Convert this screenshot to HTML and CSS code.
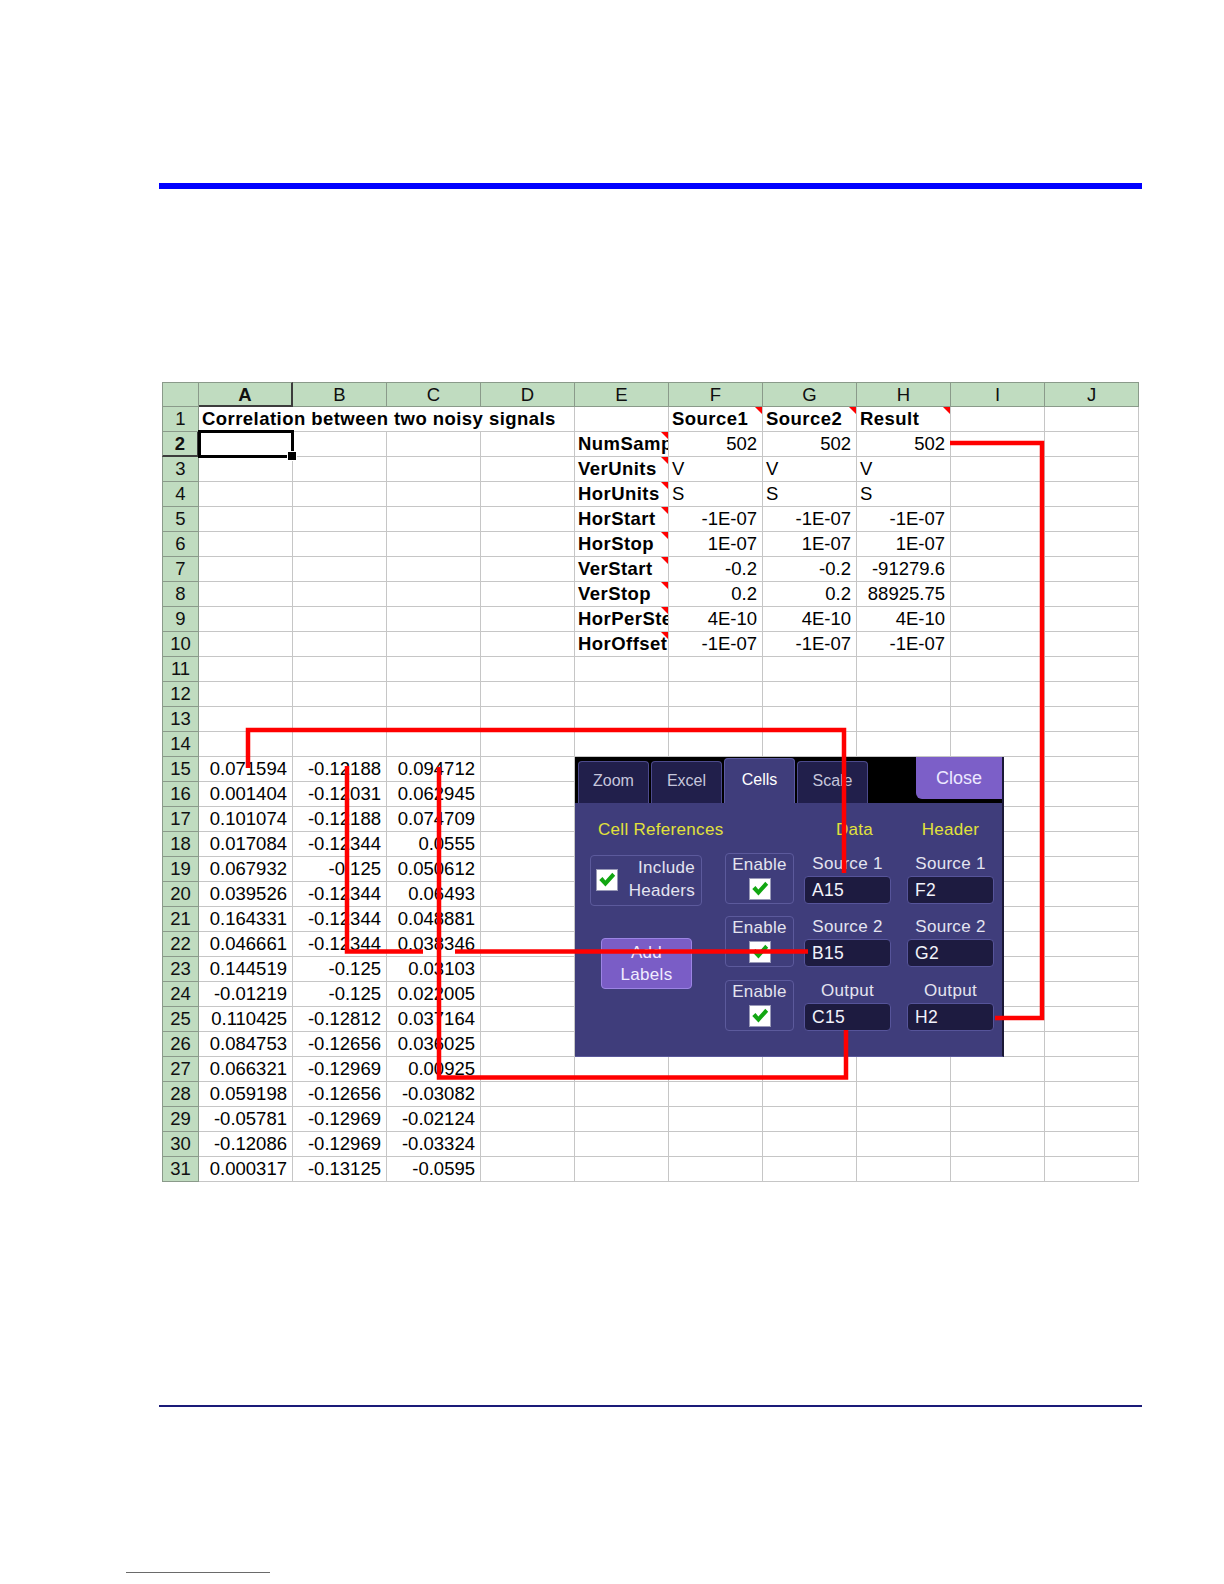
FILE: index.html
```html
<!DOCTYPE html>
<html>
<head>
<meta charset="utf-8">
<title>Correlation between two noisy signals</title>
<link rel="stylesheet" href="styles.css">
</head>
<body>
<div class="page">
  <div class="topbar"></div>

  <div class="sheet">
    <div class="row hdr"><div></div><div class="hsel">A</div><div>B</div><div>C</div><div>D</div><div>E</div><div>F</div><div>G</div><div>H</div><div>I</div><div>J</div></div>
    <div class="row"><div class="rh">1</div><div class="span4 t b">Correlation between two noisy signals</div><div></div><div class="t b note">Source1</div><div class="t b note">Source2</div><div class="t b note">Result</div><div></div><div></div></div>
    <div class="row"><div class="rh hsel">2</div><div class="sel"></div><div></div><div></div><div></div><div class="t b note">NumSamp</div><div class="n">502</div><div class="n">502</div><div class="n">502</div><div></div><div></div></div>
    <div class="row"><div class="rh">3</div><div></div><div></div><div></div><div></div><div class="t b note">VerUnits</div><div class="t">V</div><div class="t">V</div><div class="t">V</div><div></div><div></div></div>
    <div class="row"><div class="rh">4</div><div></div><div></div><div></div><div></div><div class="t b note">HorUnits</div><div class="t">S</div><div class="t">S</div><div class="t">S</div><div></div><div></div></div>
    <div class="row"><div class="rh">5</div><div></div><div></div><div></div><div></div><div class="t b note">HorStart</div><div class="n">-1E-07</div><div class="n">-1E-07</div><div class="n">-1E-07</div><div></div><div></div></div>
    <div class="row"><div class="rh">6</div><div></div><div></div><div></div><div></div><div class="t b note">HorStop</div><div class="n">1E-07</div><div class="n">1E-07</div><div class="n">1E-07</div><div></div><div></div></div>
    <div class="row"><div class="rh">7</div><div></div><div></div><div></div><div></div><div class="t b note">VerStart</div><div class="n">-0.2</div><div class="n">-0.2</div><div class="n">-91279.6</div><div></div><div></div></div>
    <div class="row"><div class="rh">8</div><div></div><div></div><div></div><div></div><div class="t b note">VerStop</div><div class="n">0.2</div><div class="n">0.2</div><div class="n">88925.75</div><div></div><div></div></div>
    <div class="row"><div class="rh">9</div><div></div><div></div><div></div><div></div><div class="t b note">HorPerStep</div><div class="n">4E-10</div><div class="n">4E-10</div><div class="n">4E-10</div><div></div><div></div></div>
    <div class="row"><div class="rh">10</div><div></div><div></div><div></div><div></div><div class="t b note">HorOffset</div><div class="n">-1E-07</div><div class="n">-1E-07</div><div class="n">-1E-07</div><div></div><div></div></div>
    <div class="row"><div class="rh">11</div><div></div><div></div><div></div><div></div><div></div><div></div><div></div><div></div><div></div><div></div></div>
    <div class="row"><div class="rh">12</div><div></div><div></div><div></div><div></div><div></div><div></div><div></div><div></div><div></div><div></div></div>
    <div class="row"><div class="rh">13</div><div></div><div></div><div></div><div></div><div></div><div></div><div></div><div></div><div></div><div></div></div>
    <div class="row"><div class="rh">14</div><div></div><div></div><div></div><div></div><div></div><div></div><div></div><div></div><div></div><div></div></div>
    <div class="row"><div class="rh">15</div><div class="n">0.071594</div><div class="n">-0.12188</div><div class="n">0.094712</div><div></div><div></div><div></div><div></div><div></div><div></div><div></div></div>
    <div class="row"><div class="rh">16</div><div class="n">0.001404</div><div class="n">-0.12031</div><div class="n">0.062945</div><div></div><div></div><div></div><div></div><div></div><div></div><div></div></div>
    <div class="row"><div class="rh">17</div><div class="n">0.101074</div><div class="n">-0.12188</div><div class="n">0.074709</div><div></div><div></div><div></div><div></div><div></div><div></div><div></div></div>
    <div class="row"><div class="rh">18</div><div class="n">0.017084</div><div class="n">-0.12344</div><div class="n">0.0555</div><div></div><div></div><div></div><div></div><div></div><div></div><div></div></div>
    <div class="row"><div class="rh">19</div><div class="n">0.067932</div><div class="n">-0.125</div><div class="n">0.050612</div><div></div><div></div><div></div><div></div><div></div><div></div><div></div></div>
    <div class="row"><div class="rh">20</div><div class="n">0.039526</div><div class="n">-0.12344</div><div class="n">0.06493</div><div></div><div></div><div></div><div></div><div></div><div></div><div></div></div>
    <div class="row"><div class="rh">21</div><div class="n">0.164331</div><div class="n">-0.12344</div><div class="n">0.048881</div><div></div><div></div><div></div><div></div><div></div><div></div><div></div></div>
    <div class="row"><div class="rh">22</div><div class="n">0.046661</div><div class="n">-0.12344</div><div class="n">0.038346</div><div></div><div></div><div></div><div></div><div></div><div></div><div></div></div>
    <div class="row"><div class="rh">23</div><div class="n">0.144519</div><div class="n">-0.125</div><div class="n">0.03103</div><div></div><div></div><div></div><div></div><div></div><div></div><div></div></div>
    <div class="row"><div class="rh">24</div><div class="n">-0.01219</div><div class="n">-0.125</div><div class="n">0.022005</div><div></div><div></div><div></div><div></div><div></div><div></div><div></div></div>
    <div class="row"><div class="rh">25</div><div class="n">0.110425</div><div class="n">-0.12812</div><div class="n">0.037164</div><div></div><div></div><div></div><div></div><div></div><div></div><div></div></div>
    <div class="row"><div class="rh">26</div><div class="n">0.084753</div><div class="n">-0.12656</div><div class="n">0.036025</div><div></div><div></div><div></div><div></div><div></div><div></div><div></div></div>
    <div class="row"><div class="rh">27</div><div class="n">0.066321</div><div class="n">-0.12969</div><div class="n">0.00925</div><div></div><div></div><div></div><div></div><div></div><div></div><div></div></div>
    <div class="row"><div class="rh">28</div><div class="n">0.059198</div><div class="n">-0.12656</div><div class="n">-0.03082</div><div></div><div></div><div></div><div></div><div></div><div></div><div></div></div>
    <div class="row"><div class="rh">29</div><div class="n">-0.05781</div><div class="n">-0.12969</div><div class="n">-0.02124</div><div></div><div></div><div></div><div></div><div></div><div></div><div></div></div>
    <div class="row"><div class="rh">30</div><div class="n">-0.12086</div><div class="n">-0.12969</div><div class="n">-0.03324</div><div></div><div></div><div></div><div></div><div></div><div></div><div></div></div>
    <div class="row"><div class="rh">31</div><div class="n">0.000317</div><div class="n">-0.13125</div><div class="n">-0.0595</div><div></div><div></div><div></div><div></div><div></div><div></div><div></div></div>

    <div class="dlg">
      <div class="tabbar">
        <div class="tab">Zoom</div>
        <div class="tab">Excel</div>
        <div class="tab on">Cells</div>
        <div class="tab">Scale</div>
        <div class="close">Close</div>
      </div>
      <div class="dbody">
        <div class="ttl ttl-cr">Cell References</div>
        <div></div>
        <div class="ttl ttl-data">Data</div>
        <div class="ttl ttl-hdr">Header</div>

        <div class="inc">
          <span class="cb"><svg viewBox="0 0 22 22" width="20" height="20"><path d="M2.5 11 L6 7.8 L9.2 11.6 L16.8 3 L20 6.2 L9.3 18.2 Z" fill="#12a612"/></svg></span>
          <div class="inc-txt">Include<br>Headers</div>
        </div>
        <div class="en"><span>Enable</span><span class="cb"><svg viewBox="0 0 22 22" width="20" height="20"><path d="M2.5 11 L6 7.8 L9.2 11.6 L16.8 3 L20 6.2 L9.3 18.2 Z" fill="#12a612"/></svg></span></div>
        <div class="fld"><div class="lbl">Source 1</div><div class="inp">A15</div></div>
        <div class="fld"><div class="lbl">Source 1</div><div class="inp">F2</div></div>

        <div class="addl"><span>Add</span><span>Labels</span></div>
        <div class="en"><span>Enable</span><span class="cb"><svg viewBox="0 0 22 22" width="20" height="20"><path d="M2.5 11 L6 7.8 L9.2 11.6 L16.8 3 L20 6.2 L9.3 18.2 Z" fill="#12a612"/></svg></span></div>
        <div class="fld"><div class="lbl">Source 2</div><div class="inp">B15</div></div>
        <div class="fld"><div class="lbl">Source 2</div><div class="inp">G2</div></div>

        <div class="en"><span>Enable</span><span class="cb"><svg viewBox="0 0 22 22" width="20" height="20"><path d="M2.5 11 L6 7.8 L9.2 11.6 L16.8 3 L20 6.2 L9.3 18.2 Z" fill="#12a612"/></svg></span></div>
        <div class="fld"><div class="lbl">Output</div><div class="inp">C15</div></div>
        <div class="fld"><div class="lbl">Output</div><div class="inp">H2</div></div>
      </div>
    </div>

    <svg class="links" width="977" height="800" viewBox="0 0 977 800">
      <g fill="none" stroke="#ff0000" stroke-width="4.5" stroke-linejoin="miter">
        <polyline points="788,61 880,61 880,636 833,636"/>
        <polyline points="86,386 86,348 682,348 682,491"/>
        <polyline points="185,384 185,569.5 261,569.5"/>
        <line x1="293" y1="569.5" x2="646" y2="569.5"/>
        <polyline points="277,385 277,695.5 684,695.5 684,648"/>
      </g>
    </svg>
  </div>

  <div class="rule"></div>
  <div class="foot"></div>
</div>
</body>
</html>
```

FILE: styles.css
```css
* { box-sizing: border-box; }

body {
  margin: 0;
  background: #ffffff;
  font-family: "Liberation Sans", Arial, sans-serif;
}

.page {
  width: 1224px;
  height: 1584px;
  overflow: hidden;
  padding-top: 183px;
}

.topbar {
  margin-left: 159px;
  width: 983px;
  height: 6px;
  background: #0000ff;
}

/* ---------- spreadsheet ---------- */
.sheet {
  position: relative;
  margin-top: 193px;
  margin-left: 162px;
  width: 977px;
  font-size: 18.5px;
  color: #000;
}

.row {
  display: grid;
  grid-template-columns: 37px repeat(10, 94px);
  height: 25px;
}

.row > div {
  border-right: 1px solid #c6c6c6;
  border-bottom: 1px solid #c6c6c6;
  line-height: 24px;
  white-space: nowrap;
  overflow: hidden;
}

.hdr > div {
  background: #c0dcc0;
  border-top: 1px solid #8a9a8a;
  border-right-color: #8a9a8a;
  border-bottom-color: #8a9a8a;
  line-height: 23px;
  text-align: center;
  color: #101010;
}

.hdr > div:first-child,
.row > .rh {
  border-left: 1px solid #8a9a8a;
}

.row > .rh {
  background: #c0dcc0;
  border-right-color: #8a9a8a;
  border-bottom-color: #8a9a8a;
  text-align: center;
  color: #101010;
}

.hdr > .hsel {
  font-weight: bold;
  border-right: 2px solid #3c3c3c;
  border-bottom: 2px solid #3c3c3c;
}

.row > .rh.hsel {
  font-weight: bold;
  border-right: 2px solid #3c3c3c;
  border-bottom: 2px solid #3c3c3c;
}

.row > .n { text-align: right; padding-right: 5px; }
.row > .t { padding-left: 3px; }
.b { font-weight: bold; letter-spacing: 0.45px; }
.row > .span4 { grid-column: span 4; }

.row > .note { position: relative; }
.row > .note::after {
  content: "";
  position: absolute;
  top: 0;
  right: 0;
  border-top: 7px solid #ff0000;
  border-left: 7px solid transparent;
}

.row > .sel {
  position: relative;
  overflow: visible;
  z-index: 1;
}
.row > .sel::before {
  content: "";
  position: absolute;
  left: -1px;
  top: -2px;
  right: -2px;
  bottom: -2px;
  border: 3px solid #000;
}
.row > .sel::after {
  content: "";
  position: absolute;
  right: -5px;
  bottom: -5px;
  width: 8px;
  height: 8px;
  background: #000;
  border: 1px solid #fff;
}

/* ---------- overlay dialog ---------- */
.dlg {
  position: absolute;
  left: 413px;
  top: 375px;
  width: 429px;
  height: 300px;
  z-index: 2;
  background: #3f3d7b;
  border-right: 2px solid #1b1936;
  border-bottom: 1px solid #5a589a;
  font-family: "Liberation Sans", Arial, sans-serif;
}

.tabbar {
  display: flex;
  align-items: flex-end;
  gap: 2px;
  height: 46px;
  padding-left: 3px;
  background: #000;
}

.tab {
  width: 71px;
  height: 42px;
  display: flex;
  align-items: center;
  justify-content: center;
  padding-bottom: 3px;
  background: #211f4b;
  border: 1px solid #4c4a8c;
  border-bottom: none;
  border-radius: 4px 4px 0 0;
  color: #c6c6dc;
  font-size: 16px;
}

.tab.on {
  height: 45px;
  background: #3f3d7b;
  border-color: #5c5aa2;
  color: #ffffff;
}

.close {
  margin-left: auto;
  align-self: flex-start;
  width: 86px;
  height: 42px;
  display: flex;
  align-items: center;
  justify-content: center;
  background: #7c5fc8;
  border-radius: 0 0 0 6px;
  color: #ece8ff;
  font-size: 18px;
}

.dbody {
  display: grid;
  grid-template-columns: 135px 79px 103px 87px;
  grid-template-rows: 20px 51px 51px 51px;
  row-gap: 12.5px;
  height: 253px;
  padding: 17px 0 0 15px;
  font-size: 17px;
  letter-spacing: 0.3px;
  color: #e4e4f0;
}

.ttl {
  color: #e2e23a;
  line-height: 20px;
  white-space: nowrap;
}
.ttl-cr { padding-left: 8px; }
.ttl-data { width: 87px; padding-left: 14px; text-align: center; }
.ttl-hdr { width: 87px; text-align: center; }

.cb {
  width: 22px;
  height: 22px;
  display: flex;
  align-items: center;
  justify-content: center;
  background: #ffffff;
  border: 1px solid #9a9ab8;
}

.inc {
  margin-top: 2px;
  width: 112px;
  height: 51px;
  display: flex;
  align-items: center;
  padding: 0 6px 0 5px;
  border: 1px solid #5c5a9c;
  border-radius: 4px;
}
.inc-txt {
  margin-left: auto;
  text-align: right;
  line-height: 22.7px;
}

.en {
  width: 69px;
  height: 51px;
  display: flex;
  flex-direction: column;
  align-items: center;
  border: 1px solid #5c5a9c;
  border-radius: 4px;
}
.en > span:first-child { line-height: 22px; }
.en .cb { margin-top: 2px; }

.fld {
  width: 87px;
  display: flex;
  flex-direction: column;
}
.lbl {
  height: 22px;
  line-height: 22px;
  text-align: center;
  white-space: nowrap;
}
.inp {
  margin-top: 1px;
  height: 28px;
  padding-left: 7px;
  line-height: 26px;
  background: #1d1b40;
  border: 1px solid #56549a;
  border-radius: 4px;
  color: #f2f2fa;
  font-size: 17.5px;
}

.addl {
  grid-column: 1;
  grid-row: 3 / span 2;
  align-self: start;
  margin: 22px 0 0 11px;
  width: 91px;
  height: 51px;
  display: flex;
  flex-direction: column;
  align-items: center;
  justify-content: center;
  line-height: 21.7px;
  background: #7a5dc6;
  border: 1px solid #9c84e4;
  border-radius: 4px;
  color: #f0ecff;
}

.links {
  position: absolute;
  left: 0;
  top: 0;
  z-index: 3;
  pointer-events: none;
}

/* ---------- page rules ---------- */
.rule {
  margin-top: 223px;
  margin-left: 159px;
  width: 983px;
  height: 2px;
  background: #1a1a78;
}

.foot {
  margin-top: 165px;
  margin-left: 126px;
  width: 144px;
  height: 1px;
  background: #6a6a6a;
}
```
